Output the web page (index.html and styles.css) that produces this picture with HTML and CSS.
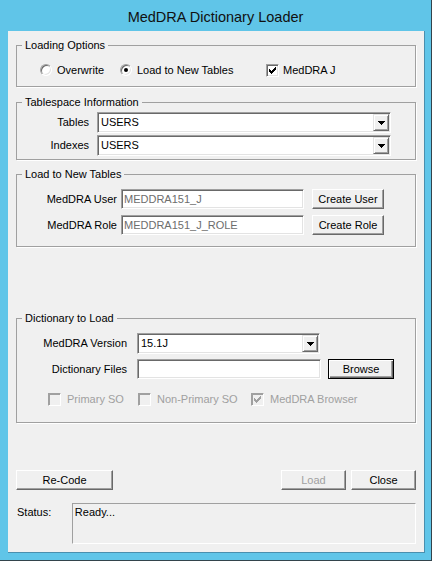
FILE: index.html
```html
<!DOCTYPE html>
<html>
<head>
<meta charset="utf-8">
<title>MedDRA Dictionary Loader</title>
<link rel="stylesheet" href="styles.css">
</head>
<body>
<div class="window">
  <div class="titlebar">MedDRA Dictionary Loader</div>
  <div class="client">
    <fieldset class="group g-options">
      <legend>Loading Options</legend>
      <div class="opts">
        <div class="opt"><span class="radio"></span>Overwrite</div>
        <div class="opt"><span class="radio checked"><span class="dot"></span></span>Load to New Tables</div>
        <div class="opt"><span class="check"><svg width="7" height="7" viewBox="0 0 7 7"><path d="M0 2V5H1V6H2V7H3V6H4V5H5V4H6V3H7V0H6V1H5V2H4V3H3V4H2V3H1V2Z" fill="#000"/></svg></span>MedDRA J</div>
      </div>
    </fieldset>

    <fieldset class="group g-space">
      <legend>Tablespace Information</legend>
      <div class="ts-grid">
        <div class="lbl">Tables</div>
        <div class="combo"><span class="combo-text">USERS</span><span class="drop"><svg width="7" height="4" viewBox="0 0 7 4"><path d="M0 0H7V1H6V2H5V3H4V4H3V3H2V2H1V1H0Z" fill="#000"/></svg></span></div>
        <div class="lbl">Indexes</div>
        <div class="combo"><span class="combo-text">USERS</span><span class="drop"><svg width="7" height="4" viewBox="0 0 7 4"><path d="M0 0H7V1H6V2H5V3H4V4H3V3H2V2H1V1H0Z" fill="#000"/></svg></span></div>
      </div>
    </fieldset>

    <fieldset class="group g-new">
      <legend>Load to New Tables</legend>
      <div class="nt-grid">
        <div class="lbl">MedDRA User</div>
        <div class="field ro">MEDDRA151_J</div>
        <div class="btn nt-btn">Create User</div>
        <div class="lbl">MedDRA Role</div>
        <div class="field ro">MEDDRA151_J_ROLE</div>
        <div class="btn nt-btn">Create Role</div>
      </div>
    </fieldset>

    <fieldset class="group g-dict">
      <legend>Dictionary to Load</legend>
      <div class="dl-grid">
        <div class="lbl">MedDRA Version</div>
        <div class="combo combo-ver"><span class="combo-text">15.1J</span><span class="drop"><svg width="7" height="4" viewBox="0 0 7 4"><path d="M0 0H7V1H6V2H5V3H4V4H3V3H2V2H1V1H0Z" fill="#000"/></svg></span></div>
        <div></div>
        <div class="lbl">Dictionary Files</div>
        <div class="field"></div>
        <div class="btn default browse">Browse</div>
      </div>
      <div class="checks">
        <div class="opt dis"><span class="check disabled"></span>Primary SO</div>
        <div class="opt dis"><span class="check disabled"></span>Non-Primary SO</div>
        <div class="opt dis"><span class="check disabled"><svg width="7" height="7" viewBox="0 0 7 7"><path d="M0 2V5H1V6H2V7H3V6H4V5H5V4H6V3H7V0H6V1H5V2H4V3H3V4H2V3H1V2Z" fill="#a0a0a0"/></svg></span>MedDRA Browser</div>
      </div>
    </fieldset>

    <div class="actions">
      <div class="btn recode">Re-Code</div>
      <div class="right-btns">
        <div class="btn small disabled-btn">Load</div>
        <div class="btn small">Close</div>
      </div>
    </div>

    <div class="status">
      <div class="status-lbl">Status:</div>
      <div class="status-box">Ready...</div>
    </div>
  </div>
</div>
</body>
</html>
```
FILE: styles.css
```css
body {
  margin: 0;
  background: #60c5e8;
}

.window {
  width: 432px;
  height: 561px;
  box-sizing: border-box;
  background: #60c5e8;
  border-right: 1px solid #33444c;
  border-bottom: 1px solid #33444c;
  font-family: "Liberation Sans", Arial, sans-serif;
  font-size: 11px;
  color: #000;
}

.titlebar {
  height: 31px;
  box-sizing: border-box;
  padding-top: 3px;
  line-height: 28px;
  text-align: center;
  font-size: 14.5px;
  color: #111;
}

.client {
  margin-left: 8px;
  width: 417px;
  height: 522px;
  box-sizing: border-box;
  background: #f0f0f0;
  border-right: 1px solid #4a8fae;
  border-bottom: 1px solid #4a8fae;
  padding: 0 8px;
  display: flex;
  flex-direction: column;
}

.group {
  margin: 0;
  padding: 0;
  border: 1px solid #a0a0a0;
  box-shadow: 1px 1px #fff;
  min-inline-size: 0;
}

.group legend {
  padding: 0 3px;
  margin-left: 5px;
  line-height: 13px;
  height: 13px;
}

.g-options { margin-top: 8px; padding: 11px 0 9px 0; }
.g-space { margin-top: 9px; padding: 3px 0 3px 0; }
.g-new { margin-top: 8px; padding: 8px 0 11px 0; }
.g-dict { margin-top: 65px; padding: 8px 0 16px 0; }

.opts {
  display: grid;
  grid-template-columns: 80px 146px auto;
  padding-left: 23px;
  height: 14px;
  align-items: center;
}

.opt {
  display: flex;
  align-items: center;
  white-space: nowrap;
  line-height: 13px;
}

.radio {
  width: 12px;
  height: 12px;
  box-sizing: border-box;
  border-radius: 50%;
  background: #fff;
  border: 1px solid;
  border-color: #a0a0a0 #fff #fff #a0a0a0;
  box-shadow: inset 1px 1px #696969, inset -1px -1px #e3e3e3;
  margin-right: 5px;
  display: flex;
  align-items: center;
  justify-content: center;
}

.dot {
  width: 4px;
  height: 4px;
  border-radius: 50%;
  background: #000;
}

.check {
  width: 13px;
  height: 13px;
  box-sizing: border-box;
  background: #fff;
  border: 1px solid;
  border-color: #a0a0a0 #fff #fff #a0a0a0;
  box-shadow: inset 1px 1px #696969, inset -1px -1px #e3e3e3;
  margin-right: 4px;
  display: flex;
  align-items: center;
  justify-content: center;
}

.check svg { display: block; }

.check.disabled {
  background: #f0f0f0;
  box-shadow: inset 1px 1px #a0a0a0;
  margin-right: 6px;
}

.dis { color: #a0a0a0; }

.lbl {
  text-align: right;
  align-self: center;
  white-space: nowrap;
  line-height: 13px;
}

.ts-grid {
  display: grid;
  grid-template-columns: 72px 294px;
  grid-auto-rows: 21px;
  column-gap: 8px;
  row-gap: 2px;
}

.combo {
  box-sizing: border-box;
  height: 21px;
  background: #fff;
  border: 1px solid;
  border-color: #a0a0a0 #fff #fff #a0a0a0;
  box-shadow: inset 1px 1px #696969, inset -1px -1px #e3e3e3;
  padding: 1px;
  display: flex;
  align-items: center;
}

.combo-text {
  flex: 1;
  padding-left: 2px;
  line-height: 13px;
}

.drop {
  width: 16px;
  height: 17px;
  box-sizing: border-box;
  background: #f0f0f0;
  border: 1px solid;
  border-color: #e3e3e3 #696969 #696969 #e3e3e3;
  box-shadow: inset 1px 1px #fff, inset -1px -1px #a0a0a0;
  display: flex;
  align-items: center;
  justify-content: center;
}

.drop svg { display: block; }

.nt-grid {
  display: grid;
  grid-template-columns: 100px 183px 76px;
  grid-auto-rows: 20px;
  column-gap: 4px;
  row-gap: 6px;
}

.field {
  box-sizing: border-box;
  height: 20px;
  background: #fff;
  border: 1px solid;
  border-color: #a0a0a0 #fff #fff #a0a0a0;
  box-shadow: inset 1px 1px #696969, inset -1px -1px #e3e3e3;
  padding: 0 2px;
  line-height: 18px;
  white-space: nowrap;
}

.field.ro { color: #6d6d6d; }

.btn {
  box-sizing: border-box;
  height: 20px;
  background: #f0f0f0;
  border: 1px solid;
  border-color: #fff #696969 #696969 #fff;
  box-shadow: inset -1px -1px #a0a0a0;
  display: flex;
  align-items: center;
  justify-content: center;
  white-space: nowrap;
  line-height: 13px;
}

.nt-btn { margin-left: 4px; }

.btn.default {
  border-color: #000;
  box-shadow: inset 1px 1px #fff, inset -1px -1px #696969, inset -2px -2px #a0a0a0;
}

.dl-grid {
  display: grid;
  grid-template-columns: 110px 184px 69px;
  grid-template-rows: 21px 20px;
  column-gap: 10px;
  row-gap: 5px;
}

.combo-ver { width: 183px; }
.browse { margin-left: -3px; width: 66px; }

.checks {
  display: grid;
  grid-template-columns: 90px 113px auto;
  padding-left: 31px;
  margin-top: 13px;
  height: 14px;
  align-items: center;
}

.actions {
  margin-top: 47px;
  display: flex;
  justify-content: space-between;
}

.recode { width: 97px; }

.right-btns {
  display: flex;
  gap: 5px;
}

.small { width: 65px; }

.disabled-btn { color: #a0a0a0; }

.status {
  margin-top: 13px;
  display: flex;
}

.status-lbl {
  width: 55px;
  padding: 3px 0 0 1px;
  line-height: 13px;
}

.status-box {
  box-sizing: border-box;
  width: 345px;
  height: 41px;
  background: #f0f0f0;
  border: 1px solid;
  border-color: #a0a0a0 #fff #fff #a0a0a0;
  padding: 2px 2px;
  line-height: 13px;
}
```
